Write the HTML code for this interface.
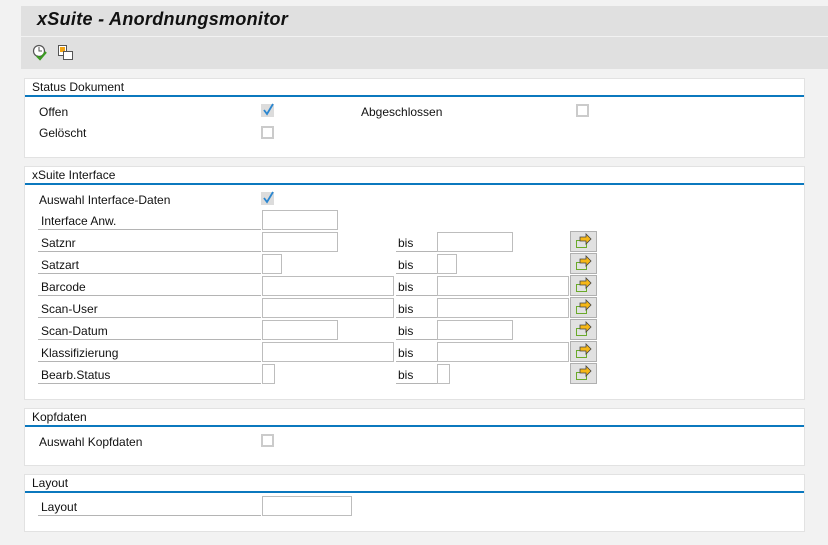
<!DOCTYPE html>
<html><head><meta charset="utf-8"><style>
*{margin:0;padding:0;box-sizing:border-box}
body{width:828px;height:545px;background:#f2f2f2;font-family:"Liberation Sans","DejaVu Sans",sans-serif;font-size:12px;color:#111;position:relative;overflow:hidden}
.a{position:absolute}
.title{left:21px;top:6px;width:807px;height:30px;background:#e0e0e0;font-weight:bold;font-style:italic;font-size:18px;letter-spacing:0.3px;padding:3px 0 0 16px;color:#111}
.tb{left:21px;top:37px;width:807px;height:32px;background:#e0e0e0}
.sec{position:absolute;left:24px;width:781px;background:#fff;border:1px solid #e2e2e2}
.sh{position:absolute;left:7px;top:1px;font-size:12px}
.bl{position:absolute;left:0;top:16px;width:779px;height:2px;background:#0b78be}
.lab{position:absolute;left:38px;width:223px;height:20px;border-bottom:1px solid #b4b4b4;padding:4px 0 0 3px}
.inp{position:absolute;height:20px;border:1px solid #bdbdbd;background:#fff}
.bis{position:absolute;left:396px;width:41px;height:20px;border-bottom:1px solid #b4b4b4;padding:4px 0 0 2px}
.btn{position:absolute;left:570px;width:27px;height:21px;background:#e1e1e1;border:1px solid #b0b0b0}
.cb{position:absolute;width:13px;height:13px;border:2px solid #cbcbcb;background:#fff}
.ck{position:absolute;width:13px;height:13px;background:#dcdcdc}
.txt{position:absolute}
</style></head><body>
<div class="a title">xSuite - Anordnungsmonitor</div>
<div class="a tb">
<svg class="a" style="left:11px;top:7px" width="18" height="18" viewBox="0 0 18 18"><circle cx="7" cy="7" r="5.5" fill="#fff" stroke="#555" stroke-width="1.2"/><path d="M7 3v4h3" stroke="#555" fill="none"/><path d="M5 12l3 3 6-7" stroke="#3a9a20" stroke-width="2.2" fill="none"/></svg>
<svg class="a" style="left:36px;top:7px" width="18" height="18" viewBox="0 0 18 18"><rect x="1.5" y="1.5" width="8" height="10" fill="#fff" stroke="#555"/><rect x="3" y="3" width="5" height="5" fill="#f2a515"/><rect x="6.5" y="7.5" width="9" height="8" fill="#fff" stroke="#555"/></svg>
</div>

<div class="sec" style="top:78px;height:80px"><div class="sh">Status Dokument</div><div class="bl"></div></div>
<div class="txt" style="left:39px;top:105px">Offen</div>
<div class="txt" style="left:39px;top:126px">Gelöscht</div>
<div class="txt" style="left:361px;top:105px">Abgeschlossen</div>

<div class="sec" style="top:166px;height:234px"><div class="sh">xSuite Interface</div><div class="bl"></div></div>
<div class="txt" style="left:39px;top:193px">Auswahl Interface-Daten</div>

<div class="sec" style="top:408px;height:58px"><div class="sh">Kopfdaten</div><div class="bl"></div></div>
<div class="txt" style="left:39px;top:435px">Auswahl Kopfdaten</div>

<div class="sec" style="top:474px;height:58px"><div class="sh">Layout</div><div class="bl"></div></div>
<div class="lab" style="top:496px">Layout</div>
<div class="inp" style="left:262px;top:496px;width:90px"></div>

<div class="ck" style="left:261px;top:104px"></div><svg class="a" style="left:261px;top:103px" width="14" height="14"><path d="M3 7l3 4 6-10" stroke="#2a86d0" stroke-width="1.8" fill="none"/></svg>
<div class="cb" style="left:261px;top:126px"></div>
<div class="cb" style="left:576px;top:104px"></div>
<div class="ck" style="left:261px;top:192px"></div><svg class="a" style="left:261px;top:191px" width="14" height="14"><path d="M3 7l3 4 6-10" stroke="#2a86d0" stroke-width="1.8" fill="none"/></svg>
<div class="cb" style="left:261px;top:434px"></div>

<div class="lab" style="top:210px">Interface Anw.</div>
<div class="inp" style="left:262px;top:210px;width:76px"></div>

<div class="lab" style="top:232px">Satznr</div>
<div class="inp" style="left:262px;top:232px;width:76px"></div>
<div class="bis" style="top:232px">bis</div>
<div class="inp" style="left:437px;top:232px;width:76px"></div>

<div class="lab" style="top:254px">Satzart</div>
<div class="inp" style="left:262px;top:254px;width:20px"></div>
<div class="bis" style="top:254px">bis</div>
<div class="inp" style="left:437px;top:254px;width:20px"></div>

<div class="lab" style="top:276px">Barcode</div>
<div class="inp" style="left:262px;top:276px;width:132px"></div>
<div class="bis" style="top:276px">bis</div>
<div class="inp" style="left:437px;top:276px;width:132px"></div>

<div class="lab" style="top:298px">Scan-User</div>
<div class="inp" style="left:262px;top:298px;width:132px"></div>
<div class="bis" style="top:298px">bis</div>
<div class="inp" style="left:437px;top:298px;width:132px"></div>

<div class="lab" style="top:320px">Scan-Datum</div>
<div class="inp" style="left:262px;top:320px;width:76px"></div>
<div class="bis" style="top:320px">bis</div>
<div class="inp" style="left:437px;top:320px;width:76px"></div>

<div class="lab" style="top:342px">Klassifizierung</div>
<div class="inp" style="left:262px;top:342px;width:132px"></div>
<div class="bis" style="top:342px">bis</div>
<div class="inp" style="left:437px;top:342px;width:132px"></div>

<div class="lab" style="top:364px">Bearb.Status</div>
<div class="inp" style="left:262px;top:364px;width:13px"></div>
<div class="bis" style="top:364px">bis</div>
<div class="inp" style="left:437px;top:364px;width:13px"></div>

<svg width="0" height="0" style="position:absolute"><defs><g id="ar"><rect x="5.5" y="8.5" width="10" height="7" fill="none" stroke="#6aaa2a"/><path d="M9 5h6v-3l5 5-5 5v-3h-6z" fill="#f6b716" stroke="#444" stroke-width="0.8"/></g></defs></svg>
<div class="btn" style="top:231px"><svg width="25" height="19"><use href="#ar"/></svg></div>
<div class="btn" style="top:253px"><svg width="25" height="19"><use href="#ar"/></svg></div>
<div class="btn" style="top:275px"><svg width="25" height="19"><use href="#ar"/></svg></div>
<div class="btn" style="top:297px"><svg width="25" height="19"><use href="#ar"/></svg></div>
<div class="btn" style="top:319px"><svg width="25" height="19"><use href="#ar"/></svg></div>
<div class="btn" style="top:341px"><svg width="25" height="19"><use href="#ar"/></svg></div>
<div class="btn" style="top:363px"><svg width="25" height="19"><use href="#ar"/></svg></div>
</body></html>
